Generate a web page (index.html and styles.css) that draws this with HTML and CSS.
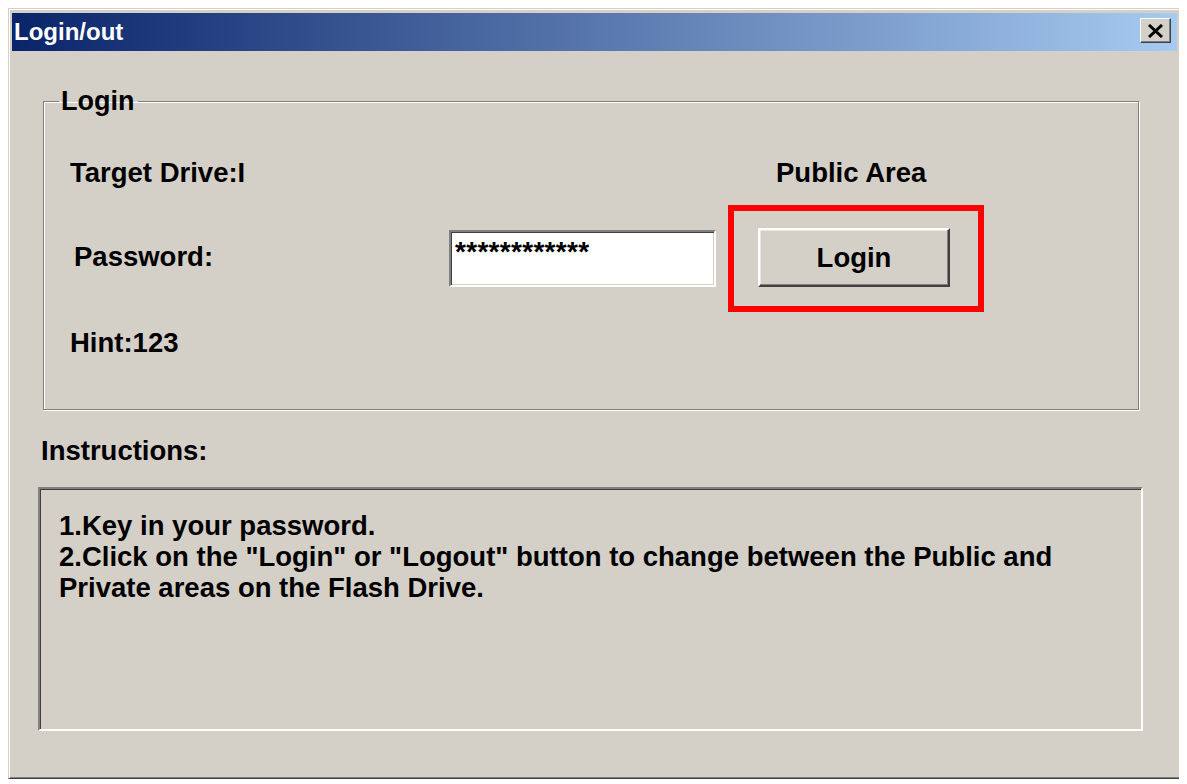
FILE: index.html
```html
<!DOCTYPE html>
<html lang="en">
<head>
<meta charset="utf-8">
<title>Login/out</title>
<link rel="stylesheet" href="styles.css">
</head>
<body>
<div class="window">
  <div class="titlebar">
    <span class="title">Login/out</span>
    <button class="close" aria-label="Close">
      <svg width="17" height="14" viewBox="0 0 17 14"><path d="M2 1 L15 13 M15 1 L2 13" stroke="#000" stroke-width="3" fill="none"/></svg>
    </button>
  </div>
  <div class="body">
    <fieldset class="group">
      <legend class="legend">Login</legend>
      <div class="row row-drive">
        <span class="drive">Target Drive:I</span>
        <span class="area">Public Area</span>
      </div>
      <div class="row row-pass">
        <span class="pass-label">Password:</span>
        <div class="input">************</div>
        <div class="highlight">
          <button class="btn">Login</button>
        </div>
      </div>
      <div class="row row-hint">
        <span class="hint">Hint:123</span>
      </div>
    </fieldset>
    <div class="instr-label">Instructions:</div>
    <div class="instr-box">
      <p class="instr-text">1.Key in your password.<br>2.Click on the "Login" or "Logout" button to change between the Public and Private areas on the Flash Drive.</p>
    </div>
  </div>
</div>
</body>
</html>
```

FILE: styles.css
```css
html, body {
  background: #ffffff;
}
body {
  margin: 8px;
  font-family: "Liberation Sans", Arial, sans-serif;
  font-weight: bold;
  font-size: 27.5px;
  color: #000;
}
.window {
  box-sizing: border-box;
  width: 1173px;
  height: 771px;
  background: #d4d0c8;
  border: 1px solid;
  border-color: #d4d0c8 #404040 #404040 #d4d0c8;
  box-shadow: inset 1px 1px 0 #ffffff, inset -1px -1px 0 #808080;
  padding: 4px 3px 3px 3px;
}
.titlebar {
  height: 38px;
  display: flex;
  align-items: center;
  justify-content: space-between;
  background: linear-gradient(to right, #0a246a, #a6caf0);
}
.title {
  color: #fff;
  font-size: 24px;
  line-height: 38px;
  padding-left: 2px;
}
.close {
  box-sizing: border-box;
  width: 31px;
  height: 25px;
  margin: 0 6px 3px 0;
  padding: 0;
  background: #d4d0c8;
  border: 1px solid;
  border-color: #ffffff #404040 #404040 #ffffff;
  box-shadow: inset -1px -1px 0 #808080;
  display: flex;
  align-items: center;
  justify-content: center;
}
.close svg {
  display: block;
}
.body {
  padding-left: 31px;
}
.group {
  box-sizing: border-box;
  width: 1096px;
  margin: 35px 0 0 0;
  padding: 42px 0 51px 26px;
  border: 1px solid #808080;
  box-shadow: 1px 1px 0 #ffffff, inset 1px 1px 0 #ffffff;
  min-inline-size: 0;
}
.legend {
  margin-left: -11px;
  padding: 0 4px 0 2px;
  line-height: 30px;
  font-size: 27px;
}
.row {
  display: flex;
  align-items: center;
}
.row-drive {
  height: 30px;
  line-height: 30px;
}
.drive {
  width: 706px;
}
.row-pass {
  margin-top: 17px;
  height: 107px;
}
.pass-label {
  width: 375px;
  margin-left: 4px;
  line-height: 30px;
  margin-top: -4px;
}
.input {
  box-sizing: border-box;
  width: 267px;
  height: 57px;
  margin-top: -1px;
  background: #fff;
  border: 2px solid;
  border-color: #808080 #ffffff #ffffff #808080;
  box-shadow: inset 1px 1px 0 #404040, inset -1px -1px 0 #d4d0c8;
  font-size: 28px;
  line-height: 30px;
  padding: 5px 0 0 4px;
  letter-spacing: 0.3px;
}
.highlight {
  box-sizing: border-box;
  width: 256px;
  height: 107px;
  margin-left: 12px;
  border: 6px solid #ff0000;
  display: flex;
  align-items: center;
  padding-left: 24px;
}
.btn {
  box-sizing: border-box;
  width: 192px;
  height: 59px;
  margin-top: -2px;
  background: #d4d0c8;
  border: 2px solid;
  border-color: #ffffff #404040 #404040 #ffffff;
  box-shadow: inset -1px -1px 0 #808080, inset 1px 1px 0 #e8e6e0;
  font-family: inherit;
  font-weight: bold;
  font-size: 27.5px;
  color: #000;
  padding: 0;
}
.row-hint {
  margin-top: 16px;
  height: 30px;
  line-height: 30px;
}
.instr-label {
  margin: 26px 0 0 -2px;
  line-height: 30px;
}
.instr-box {
  box-sizing: border-box;
  width: 1105px;
  height: 244px;
  margin: 21px 0 0 -5px;
  border: 2px solid;
  border-color: #808080 #ffffff #ffffff #808080;
  box-shadow: inset 1px 1px 0 #404040, inset -1px -1px 0 #d4d0c8;
  padding: 21px 0 0 19px;
}
.instr-text {
  margin: 0;
  width: 1020px;
  line-height: 31px;
}
```
